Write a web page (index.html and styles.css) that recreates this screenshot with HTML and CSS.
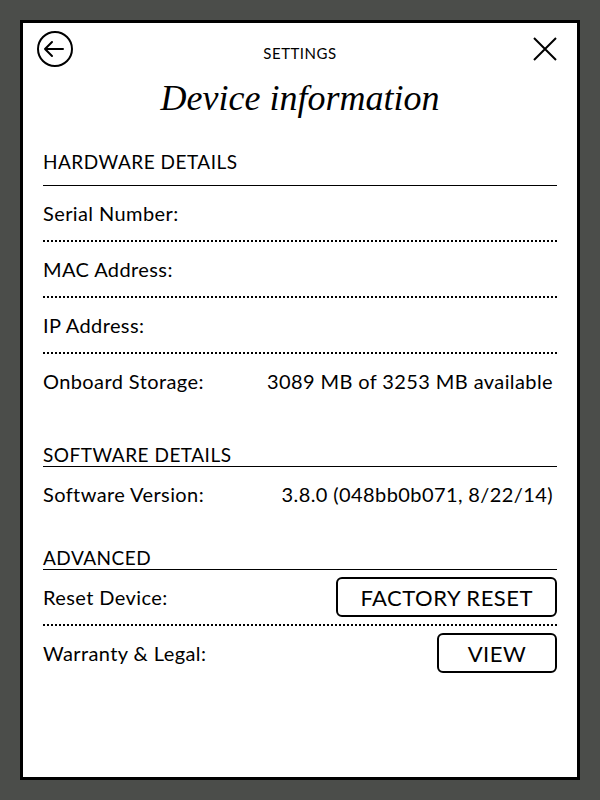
FILE: index.html
```html
<!DOCTYPE html>
<html lang="en">
<head>
<meta charset="utf-8">
<title>Device information</title>
<link rel="stylesheet" href="styles.css">
</head>
<body>
<div class="screen">
  <header class="topbar">
    <svg class="icon" width="36" height="36" viewBox="0 0 36 36" aria-label="Back">
      <circle cx="18" cy="18" r="17" fill="none" stroke="#000" stroke-width="2"/>
      <path d="M8 18 H26 M15 11 L8 18 L15 25" fill="none" stroke="#000" stroke-width="2" stroke-linecap="round" stroke-linejoin="round"/>
    </svg>
    <div class="crumb">SETTINGS</div>
    <svg class="icon close" width="36" height="36" viewBox="0 0 36 36" aria-label="Close">
      <path d="M7 7 L29 29 M29 7 L7 29" fill="none" stroke="#000" stroke-width="2"/>
    </svg>
  </header>
  <h1 class="title">Device information</h1>

  <section class="group">
    <h2 class="group-head first">HARDWARE DETAILS</h2>
    <div class="row dotted"><span>Serial Number:</span><span class="value"></span></div>
    <div class="row dotted"><span>MAC Address:</span><span class="value"></span></div>
    <div class="row dotted"><span>IP Address:</span><span class="value"></span></div>
    <div class="row"><span>Onboard Storage:</span><span class="value">3089 MB of 3253 MB available</span></div>
  </section>

  <section class="group">
    <h2 class="group-head soft">SOFTWARE DETAILS</h2>
    <div class="row"><span>Software Version:</span><span class="value">3.8.0 (048bb0b071, 8/22/14)</span></div>
  </section>

  <section class="group">
    <h2 class="group-head adv">ADVANCED</h2>
    <div class="row dotted"><span>Reset Device:</span><button class="btn">FACTORY RESET</button></div>
    <div class="row"><span>Warranty &amp; Legal:</span><button class="btn btn-small">VIEW</button></div>
  </section>
</div>
</body>
</html>
```

FILE: styles.css
```css
html, body {
  margin: 0;
  padding: 0;
}
body {
  background: #4b4d4a;
  width: 600px;
  height: 800px;
  font-family: Lato, "Noto Sans", "Liberation Sans", sans-serif;
  color: #000;
}
.screen {
  margin: 20px;
  height: 754px;
  border: 3px solid #000;
  background: #fff;
  padding: 0 20px 0 20px;
  box-sizing: content-box;
  width: 514px;
}
.topbar {
  display: grid;
  grid-template-columns: 1fr auto 1fr;
  align-items: start;
  padding: 8px 0 0 0;
  margin: 0 -6px;
}
.icon {
  display: block;
}
.close {
  justify-self: end;
}
.crumb {
  font-size: 15px;
  line-height: 16px;
  margin-top: 14px;
  letter-spacing: 0.5px;
}
.title {
  margin: 11px 0 0 0;
  font-family: "Liberation Serif", serif;
  font-style: italic;
  font-weight: normal;
  font-size: 36px;
  line-height: 40px;
  text-align: center;
}
.group-head {
  margin: 0;
  font-size: 19px;
  font-weight: normal;
  line-height: 22px;
  letter-spacing: 0.5px;
  border-bottom: 1px solid #000;
}
.group-head.first {
  margin-top: 33px;
  padding-bottom: 12px;
}
.group-head.soft {
  margin-top: 36px;
}
.group-head.adv {
  margin-top: 26px;
}
.row {
  display: flex;
  align-items: center;
  justify-content: space-between;
  height: 54px;
  font-size: 20px;
  letter-spacing: 0.4px;
}
.row.dotted {
  border-bottom: 2px dotted #000;
}
.value {
  padding-right: 4px;
}
.btn {
  font-family: inherit;
  font-size: 22px;
  letter-spacing: 0.5px;
  color: #000;
  background: #fff;
  border: 2px solid #000;
  border-radius: 6px;
  height: 40px;
  padding: 0 22px;
  box-sizing: border-box;
  min-width: 120px;
}
```
